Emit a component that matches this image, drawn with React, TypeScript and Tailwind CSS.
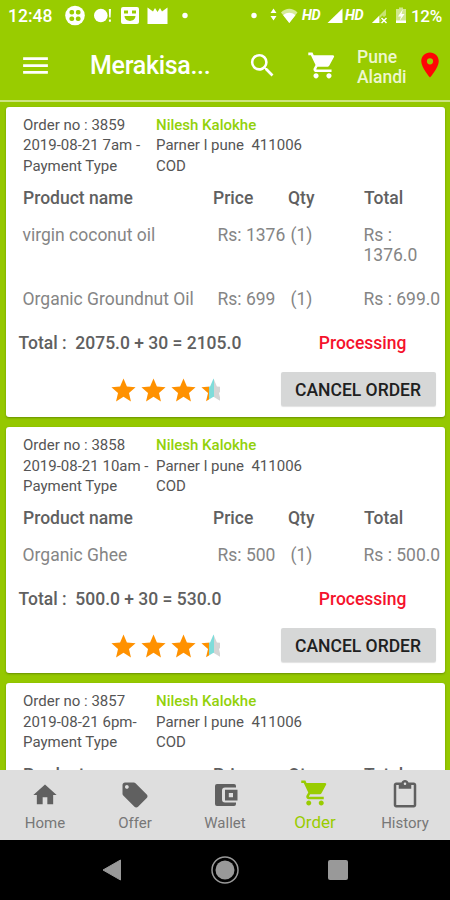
import React from 'react';
import { MdHome, MdLocalOffer, MdMenu, MdSearch, MdShoppingCart, MdLocationOn, MdContentPaste } from 'react-icons/md';

interface Item {
  name: string;
  price: string;
  qty: string;
  total: string;
  height: string;
}

interface Order {
  no: string;
  date: string;
  items: Item[];
  sum: string;
}

const orders: Order[] = [
  {
    no: '3859',
    date: '2019-08-21 7am -',
    items: [
      { name: 'virgin coconut oil', price: '1376', qty: '(1)', total: '1376.0', height: 'h-16' },
      { name: 'Organic Groundnut Oil', price: '699', qty: '(1)', total: '699.0', height: 'h-[44px]' },
    ],
    sum: '2075.0 + 30 = 2105.0',
  },
  {
    no: '3858',
    date: '2019-08-21 10am -',
    items: [{ name: 'Organic Ghee', price: '500', qty: '(1)', total: '500.0', height: 'h-[44px]' }],
    sum: '500.0 + 30 = 530.0',
  },
  {
    no: '3857',
    date: '2019-08-21 6pm-',
    items: [{ name: 'Organic Ghee', price: '500', qty: '(1)', total: '500.0', height: 'h-[44px]' }],
    sum: '500.0 + 30 = 530.0',
  },
];

const STAR = 'M12 17.27 18.18 21l-1.64-7.03L22 9.24l-7.19-.61L12 2 9.19 8.63 2 9.24l5.46 4.73L5.82 21z';

const StatusBar: React.FC = () => (
  <div className="flex h-8 items-center pl-[8px] text-white">
    <span className="w-[57px] shrink-0 text-[17.5px] font-medium leading-8">12:48</span>
    <svg className="shrink-0" width="125" height="24" viewBox="65 4 125 24" fill="#fff">
      <circle cx="75" cy="15.500" r="9.800" />
      <g fill="#99cc00">
        <rect x="69.500" y="10" width="4.600" height="4.600" rx="1.800" />
        <rect x="75.900" y="10" width="4.600" height="4.600" rx="1.800" />
        <rect x="69.500" y="16.400" width="4.600" height="4.600" rx="1.800" />
        <rect x="75.900" y="16.400" width="4.600" height="4.600" rx="1.800" />
      </g>
      <circle cx="100.800" cy="15.500" r="6.800" />
      <path d="M108.800 9h2.200l-.4 8.500h-1.400zM108.900 19.500h2v2.200h-2z" />
      <path fillRule="evenodd" d="M123 7h14a2 2 0 0 1 2 2v13a2 2 0 0 1-2 2h-14a2 2 0 0 1-2-2V9a2 2 0 0 1 2-2zm1 3.500v3h4v-3zm8 0v3h4v-3zm-7.500 5.500c.5 6.500 10.500 6.500 11 0z" />
      <path d="M147.500 7.500l5.500 4 2-3.500 2.500 4 2.500-4 2 3.500 5.500-4V24h-20z" />
      <circle cx="185" cy="15.500" r="2.700" />
    </svg>
    <svg className="ml-[60px] shrink-0" width="50" height="24" viewBox="250 4 50 24" fill="#fff">
      <circle cx="254" cy="15.500" r="2.700" />
      <path d="M273.500 8.500l3 4.500h-6zM273.500 20.500l3-4.500h-6z" />
      <path opacity=".6" d="M281 12.500c5-5 11.500-5 16.500 0L289.300 23z" />
      <path d="M283.200 15.200c4-3.200 8.200-3.200 12.200 0L289.300 23z" />
    </svg>
    <span className="ml-[2px] w-[24px] shrink-0 text-[14.500px] font-bold italic leading-8 tracking-[-0.5px]">HD</span>
    <svg className="shrink-0" width="19" height="24" viewBox="325 4 19 24" fill="#fff">
      <path d="M326.500 23h15V8.500z" />
    </svg>
    <span className="w-[24px] shrink-0 text-[14.500px] font-bold italic leading-8 tracking-[-0.5px]">HD</span>
    <svg className="shrink-0" width="40" height="24" viewBox="368 4 40 24" fill="#fff">
      <path opacity=".45" d="M371 23h14V9z" />
      <path d="M371 23l7-7v7z" />
      <path d="M380 17l6 6M386 17l-6 6" stroke="#99cc00" strokeWidth="4" />
      <path d="M380.500 18l5 5M385.500 18l-5 5" stroke="#fff" strokeWidth="1.500" />
      <path opacity=".55" d="M395 9h3V7.500h4V9h3v14h-10z" />
      <path d="M395 20.500h10V23h-10z" />
      <path d="M402 9l-5 7.500h3L398.500 21l5-7h-3z" />
    </svg>
    <span className="ml-[2px] shrink-0 text-[17px] font-medium leading-8 tracking-[-0.3px]">12%</span>
  </div>
);

const AppBar: React.FC = () => (
  <header className="flex h-[70px] items-center border-b-2 border-[#cce580] text-white">
    <MdMenu className="-mt-[2px] ml-[19px] size-[33px] shrink-0" />
    <h1 className="ml-[38px] w-[122px] shrink-0 text-[25px] font-medium leading-8 tracking-[-0.3px]">Merakisa...</h1>
    <MdSearch className="-mt-[2px] ml-[35px] size-[31px] shrink-0" />
    <MdShoppingCart className="-mt-px ml-[29px] size-[31px] shrink-0" />
    <div className="ml-[19px] w-[53px] shrink-0 pt-px text-[17.500px] font-medium leading-5 text-[#edf7cf]">
      <div>Pune</div>
      <div>Alandi</div>
    </div>
    <MdLocationOn className="-mt-[2px] ml-[5px] size-[30px] shrink-0 text-[#ff0505]" />
  </header>
);

const Rating: React.FC = () => (
  <div className="flex gap-px">
    {[0, 1, 2].map((i) => (
      <svg key={i} width="29" height="29" viewBox="0 0 24 24" fill="#ff9100">
        <path d={STAR} />
      </svg>
    ))}
    <svg width="21" height="29" viewBox="0 0 17.380 24">
      <defs>
        <linearGradient id="partial">
          <stop offset="33%" stopColor="#ff9100" />
          <stop offset="33%" stopColor="#7fdcda" />
          <stop offset="53%" stopColor="#7fdcda" />
          <stop offset="53%" stopColor="#d5d5d5" />
        </linearGradient>
      </defs>
      <path d={STAR} fill="url(#partial)" />
    </svg>
  </div>
);

const OrderCard: React.FC<{ order: Order }> = ({ order }) => (
  <section className="shrink-0 rounded-[3px] bg-white pt-[8px] shadow-[0_1px_2px_rgba(60,90,0,0.5)]">
    <div className="grid grid-cols-[133px_1fr] whitespace-pre pl-[17.500px] text-[15px] leading-[20.400px] text-[#555]">
      <span>Order no : {order.no}</span>
      <span className="font-medium text-[#92d10a]">Nilesh Kalokhe</span>
      <span>{order.date}</span>
      <span>{'Parner l pune  411006'}</span>
      <span>Payment Type</span>
      <span>COD</span>
    </div>
    <div className="mt-[11px] grid h-[22px] grid-cols-[190px_75px_76px_1fr] pl-[17.500px] text-[17.500px] font-medium leading-[22px] text-[#606060]">
      <span>Product name</span>
      <span>Price</span>
      <span>Qty</span>
      <span>Total</span>
    </div>
    <div className="pt-[16px] text-[17.500px] leading-5 text-[#858585]">
      {order.items.map((item) => (
        <div key={item.name} className={`grid grid-cols-[195px_73px_73px_78px] pl-[17px] ${item.height}`}>
          <span>{item.name}</span>
          <span className="whitespace-nowrap">Rs: {item.price}</span>
          <span>{item.qty}</span>
          <span>Rs : {item.total}</span>
        </div>
      ))}
    </div>
    <div className="flex h-5 whitespace-pre pl-[13px] text-[17.500px] font-medium leading-5 text-[#606060]">
      <span>{`Total :  ${order.sum}`}</span>
      <span className="ml-auto mr-[38px] text-[#f5122c]">Processing</span>
    </div>
    <div className="mt-[19px] flex h-[45px] items-start justify-between pl-[103px] pr-[9px]">
      <div className="pt-[4px]"><Rating /></div>
      <button className="h-[34px] w-[155px] rounded-[2px] bg-[#d6d7d7] pt-px text-[17.500px] font-medium text-[#202020] shadow-[0_1px_1px_rgba(0,0,0,0.12)]">
        CANCEL ORDER
      </button>
    </div>
  </section>
);

const WalletIcon: React.FC = () => (
  <svg width="30" height="30" viewBox="0 0 30 30" fill="#606060">
    <path d="M7 4h17a2 2 0 0 1 2 2v1.500H15a3 3 0 0 0-3 3v9a3 3 0 0 0 3 3h11V24a2 2 0 0 1-2 2H7a2 2 0 0 1-2-2V6a2 2 0 0 1 2-2z" />
    <path fillRule="evenodd" d="M15 9.700h12.500v10.800H15zm3.800 3.300v4.200H23V13z" />
  </svg>
);

const BottomNav: React.FC = () => (
  <nav className="grid h-[70px] shrink-0 grid-cols-5 bg-[#dedede] text-[15px] leading-5 text-[#777]">
    <div className="flex flex-col items-center pt-[11px]">
      <MdHome className="size-[28px] text-[#606060]" />
      <span className="mt-[4px]">Home</span>
    </div>
    <div className="flex flex-col items-center pt-[10px]">
      <MdLocalOffer className="size-[30px] text-[#606060]" />
      <span className="mt-[3px]">Offer</span>
    </div>
    <div className="flex flex-col items-center pt-[10px]">
      <WalletIcon />
      <span className="mt-[3px]">Wallet</span>
    </div>
    <div className="flex flex-col items-center pt-[8px] text-[#99cc00]">
      <MdShoppingCart className="size-[30px]" />
      <span className="mt-[4px] text-[17px]">Order</span>
    </div>
    <div className="flex flex-col items-center pt-[10px]">
      <MdContentPaste className="size-[30px] text-[#606060]" />
      <span className="mt-[3px]">History</span>
    </div>
  </nav>
);

const SystemNav: React.FC = () => (
  <div className="flex h-[60px] shrink-0 items-center justify-center gap-[81px] bg-black">
    <svg width="32" height="32" viewBox="0 0 32 32" fill="#999">
      <path d="M7 16 24.500 6v20z" stroke="#999" strokeLinejoin="round" />
    </svg>
    <svg width="32" height="32" viewBox="0 0 32 32">
      <circle cx="16" cy="16" r="9.500" fill="#999" />
      <circle cx="16" cy="16" r="13" fill="none" stroke="#999" strokeWidth="1.500" />
    </svg>
    <svg width="32" height="32" viewBox="0 0 32 32" fill="#999">
      <rect x="6" y="6" width="20" height="20" rx="2" />
    </svg>
  </div>
);

const App: React.FC = () => (
  <div className="flex h-[900px] w-[450px] flex-col overflow-hidden bg-[#99cc00] font-[Roboto,sans-serif]">
    <StatusBar />
    <AppBar />
    <main className="flex min-h-0 flex-1 flex-col gap-[10px] overflow-hidden bg-[#95c800] px-[5.500px] pt-[5px]">
      {orders.map((order) => (
        <OrderCard key={order.no} order={order} />
      ))}
    </main>
    <BottomNav />
    <SystemNav />
  </div>
);

export default App;
